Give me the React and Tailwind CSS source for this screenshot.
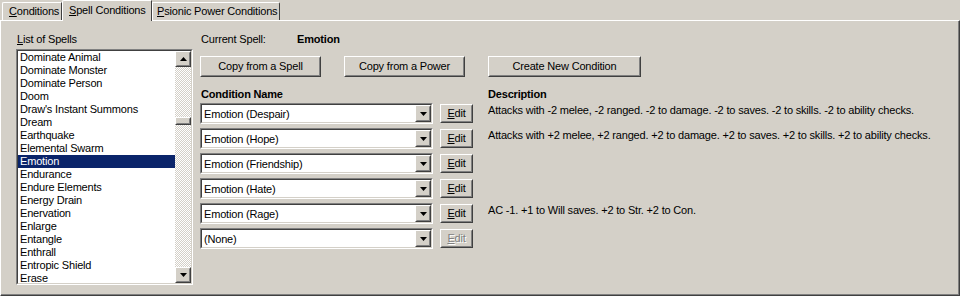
import React from "react";

const spells = [
  "Dominate Animal",
  "Dominate Monster",
  "Dominate Person",
  "Doom",
  "Draw's Instant Summons",
  "Dream",
  "Earthquake",
  "Elemental Swarm",
  "Emotion",
  "Endurance",
  "Endure Elements",
  "Energy Drain",
  "Enervation",
  "Enlarge",
  "Entangle",
  "Enthrall",
  "Entropic Shield",
  "Erase",
];

const conditions = [
  { name: "Emotion (Despair)", desc: "Attacks with -2 melee, -2 ranged. -2 to damage. -2 to saves. -2 to skills. -2 to ability checks." },
  { name: "Emotion (Hope)", desc: "Attacks with +2 melee, +2 ranged. +2 to damage. +2 to saves. +2 to skills. +2 to ability checks." },
  { name: "Emotion (Friendship)", desc: "" },
  { name: "Emotion (Hate)", desc: "" },
  { name: "Emotion (Rage)", desc: "AC -1. +1 to Will saves. +2 to Str. +2 to Con." },
  { name: "(None)", desc: "", disabled: true },
];

function Raised({ className = "", innerClass = "", children }) {
  return (
    <div className={"border-t border-l border-t-white border-l-white border-r border-b border-r-[#404040] border-b-[#404040] bg-[#d4d0c8] " + className}>
      <div className={"w-full h-full border-r border-b border-r-[#808080] border-b-[#808080] border-t border-l border-t-[#d4d0c8] border-l-[#d4d0c8] " + innerClass}>
        {children}
      </div>
    </div>
  );
}

function Arrow({ down = true }) {
  return (
    <svg width="7" height="4" viewBox="0 0 7 4" className="block">
      {down ? <polygon points="0,0 7,0 3.5,4" fill="#000" /> : <polygon points="0,4 7,4 3.5,0" fill="#000" />}
    </svg>
  );
}

function Button({ label, width }) {
  return (
    <Raised className={width + " h-[21px]"} innerClass="flex items-center justify-center leading-[13px] whitespace-nowrap">
      {label}
    </Raised>
  );
}

export default function App() {
  return (
    <div className="w-[960px] h-[296px] bg-[#d4d0c8] text-black text-[11px] leading-[13px] tracking-[-0.18px] overflow-hidden font-['Liberation_Sans',Arial,sans-serif]">
      {/* Tabs */}
      <div className="h-[20px] flex items-end pl-[2px] relative z-10 whitespace-nowrap">
        <div className="h-[18px] w-[60px] border-t border-l border-t-white border-l-white border-r border-r-[#404040] rounded-tl-[2px] flex items-center pl-[6px] pb-[1px]">
          <span><span className="underline">C</span>onditions</span>
        </div>
        <div className="h-[21px] w-[90px] -mb-px bg-[#d4d0c8] border-t border-l border-t-white border-l-white border-r border-r-[#404040] rounded-tl-[2px] flex items-center pl-[6px] pb-[2px]">
          <span><span className="underline">S</span>pell Conditions</span>
        </div>
        <div className="h-[18px] w-[128px] border-t border-l border-t-white border-l-white border-r border-r-[#404040] rounded-tr-[2px] flex items-center pl-[4px] pb-[1px]">
          <span><span className="underline">P</span>sionic Power Conditions</span>
        </div>
      </div>

      {/* Panel */}
      <div className="h-[276px] border-t border-l border-t-white border-l-white border-r border-b border-r-[#404040] border-b-[#404040]">
        <div className="w-full h-full border-r border-b border-r-[#808080] border-b-[#808080] flex pl-[15px] pt-[12px]">
          {/* Left column */}
          <div className="w-[177px] flex flex-col">
            <div className="h-[13px] pl-[1px]"><span className="underline">L</span>ist of Spells</div>
            <div className="mt-[3px] h-[236px] border-t border-l border-t-[#808080] border-l-[#808080] border-r border-b border-r-white border-b-white">
              <div className="w-full h-full border-t border-l border-t-[#404040] border-l-[#404040] border-r border-b border-r-[#d4d0c8] border-b-[#d4d0c8] bg-white flex">
                <div className="flex-1 overflow-hidden">
                  {spells.map((s) => (
                    <div
                      key={s}
                      className={
                        "h-[13px] pl-[2px] whitespace-nowrap " +
                        (s === "Emotion" ? "bg-[#0a246a] text-white" : "")
                      }
                    >
                      {s}
                    </div>
                  ))}
                </div>
                <div className="w-[16px] flex flex-col bg-[repeating-conic-gradient(#d4d0c8_0%_25%,#ffffff_0%_50%)] bg-[length:2px_2px]">
                  <Raised className="h-[16px] w-[16px]" innerClass="flex items-center justify-center">
                    <Arrow down={false} />
                  </Raised>
                  <div className="flex-1 flex flex-col">
                    <Raised className="mt-[50px] h-[8px] w-[16px]" />
                  </div>
                  <Raised className="h-[16px] w-[16px]" innerClass="flex items-center justify-center">
                    <Arrow />
                  </Raised>
                </div>
              </div>
            </div>
          </div>

          {/* Right column */}
          <div className="ml-[7px] flex flex-col">
            <div className="h-[13px] flex pl-[1px]">
              <span className="w-[96px]">Current Spell:</span>
              <span className="font-bold">Emotion</span>
            </div>
            <div className="mt-[10px] flex">
              <Button label="Copy from a Spell" width="w-[121px]" />
              <div className="ml-[23px]"><Button label="Copy from a Power" width="w-[121px]" /></div>
              <div className="ml-[23px]"><Button label="Create New Condition" width="w-[153px]" /></div>
            </div>
            <div className="mt-[11px] h-[13px] flex font-bold">
              <span className="w-[288px] pl-[1px]">Condition Name</span>
              <span>Description</span>
            </div>
            <div className="mt-[2px] flex flex-col gap-[4px]">
              {conditions.map((c) => (
                <div key={c.name} className="h-[21px] flex">
                  <div className="w-[233px] h-[21px] border-t border-l border-t-[#808080] border-l-[#808080] border-r border-b border-r-white border-b-white">
                    <div className="w-full h-full border-t border-l border-t-[#404040] border-l-[#404040] border-r border-b border-r-[#d4d0c8] border-b-[#d4d0c8] bg-white flex">
                      <div className="flex-1 flex items-center pl-[2px] pt-[1px]">{c.name}</div>
                      <Raised className="w-[16px] h-full" innerClass="flex items-center justify-center">
                        <Arrow />
                      </Raised>
                    </div>
                  </div>
                  <div className="ml-[7px] mt-[1px]">
                    <Raised className="w-[33px] h-[19px]" innerClass="flex items-center justify-center">
                      {c.disabled ? (
                        <span className="text-[#808080] [text-shadow:1px_1px_0_#ffffff]"><span className="underline">E</span>dit</span>
                      ) : (
                        <span><span className="underline">E</span>dit</span>
                      )}
                    </Raised>
                  </div>
                  <div className="ml-[15px] pt-[1px] whitespace-nowrap">{c.desc}</div>
                </div>
              ))}
            </div>
          </div>
        </div>
      </div>
    </div>
  );
}
